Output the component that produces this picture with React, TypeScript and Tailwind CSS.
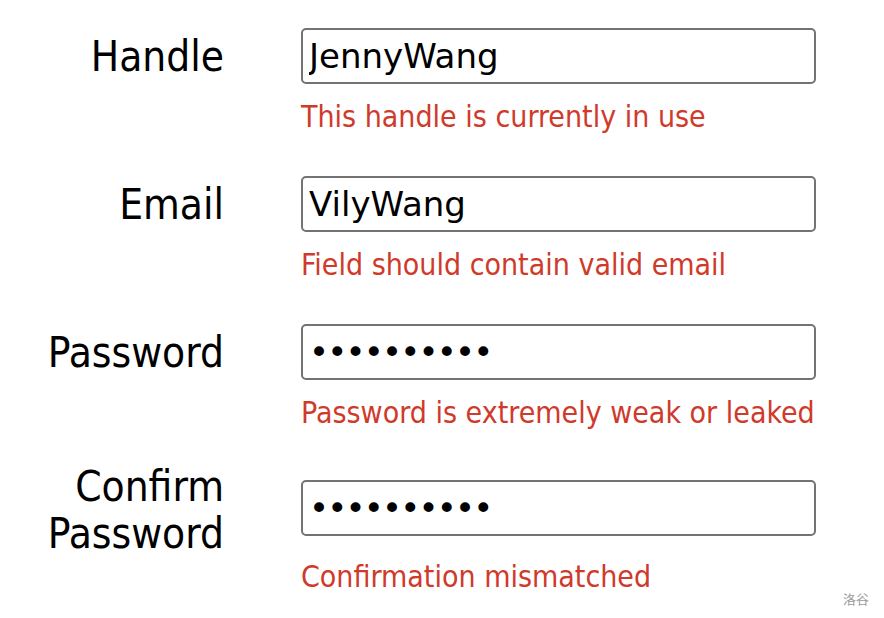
import React from 'react';

const labelFont = { fontFamily: '"DejaVu Sans Condensed", "DejaVu Sans", sans-serif' };
const inputFont = { fontFamily: '"DejaVu Sans", sans-serif' };

function Field({ type, value, className = '' }: { type: string; value: string; className?: string }) {
  return (
    <input
      type={type}
      value={value}
      readOnly
      style={inputFont}
      className={
        'ml-[77px] w-[515px] h-[56px] border-2 border-[#737373] rounded-[5px] pl-[6px] text-[34px] text-black bg-white outline-none ' +
        (type === 'password' ? 'tracking-[-1.8px] ' : '') +
        className
      }
    />
  );
}

function Error({ children, className }: { children: React.ReactNode; className: string }) {
  return (
    <p style={labelFont} className={'ml-[301px] text-[30px] leading-[36px] text-[#cf3a2b] ' + className}>
      {children}
    </p>
  );
}

export default function App() {
  return (
    <div className="relative w-[884px] h-[618px] bg-white overflow-hidden pt-[28px]">
      <div className="flex items-center">
        <label style={labelFont} className="w-[224px] text-right text-[42px] leading-[47px] text-black">
          Handle
        </label>
        <Field type="text" value="JennyWang" />
      </div>
      <Error className="mt-[15px]">This handle is currently in use</Error>

      <div className="flex items-center mt-[41px]">
        <label style={labelFont} className="w-[224px] text-right text-[42px] leading-[47px] text-black">
          Email
        </label>
        <Field type="text" value="VilyWang" />
      </div>
      <Error className="mt-[15px]">Field should contain valid email</Error>

      <div className="flex items-center mt-[41px]">
        <label style={labelFont} className="w-[224px] text-right text-[42px] leading-[47px] text-black">
          Password
        </label>
        <Field type="password" value="aaaaaaaaaa" />
      </div>
      <Error className="mt-[15px]">Password is extremely weak or leaked</Error>

      <div className="flex items-center mt-[32px]">
        <label style={labelFont} className="w-[224px] text-right text-[42px] leading-[47px] text-black">
          Confirm
          <br />
          Password
        </label>
        <Field type="password" value="aaaaaaaaaa" className="mb-[5px]" />
      </div>
      <Error className="mt-[2px]">Confirmation mismatched</Error>

      <span
        style={{ fontFamily: '"Noto Sans CJK SC", sans-serif' }}
        className="absolute left-[843px] top-[589px] text-[13px] text-[#9a9a9a]"
      >
        洛谷
      </span>
    </div>
  );
}
